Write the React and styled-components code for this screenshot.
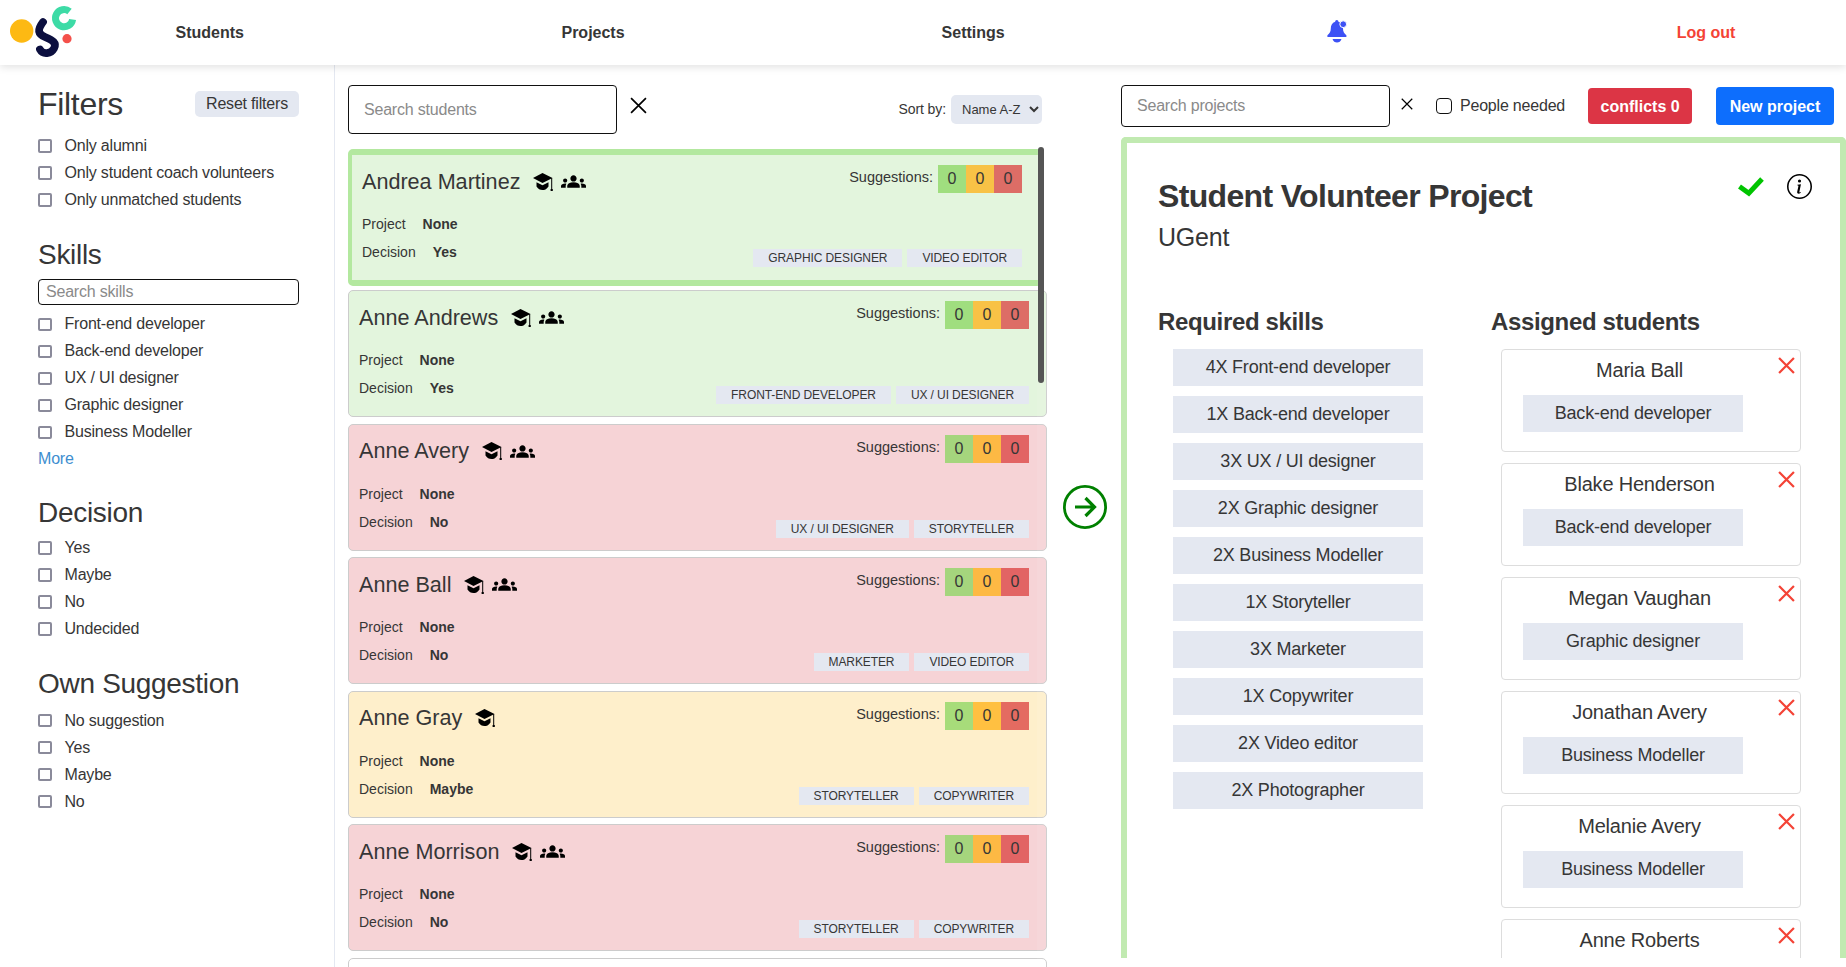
import React from 'react'
import styled, { createGlobalStyle } from 'styled-components'
import { MdGroups } from 'react-icons/md'
import { BsInfoCircle } from 'react-icons/bs'

const GlobalStyle = createGlobalStyle`
	html, body {
		margin: 0;
		height: 100%;
		overflow: hidden;
		background: #ffffff;
		color: #363636;
		font-family: 'Liberation Sans', Arial, sans-serif;
		font-size: 16px;
		letter-spacing: -0.2px;
	}
	* {
		box-sizing: border-box;
	}
	input::placeholder {
		color: #8a8a8a;
	}
`

const students = [
	{ name: 'Andrea Martinez', decision: 'Yes', tone: 'green', selected: true, group: true, skills: ['Graphic designer', 'Video editor'] },
	{ name: 'Anne Andrews', decision: 'Yes', tone: 'green', group: true, skills: ['Front-end developer', 'UX / UI designer'] },
	{ name: 'Anne Avery', decision: 'No', tone: 'red', group: true, skills: ['UX / UI designer', 'Storyteller'] },
	{ name: 'Anne Ball', decision: 'No', tone: 'red', group: true, skills: ['Marketer', 'Video editor'] },
	{ name: 'Anne Gray', decision: 'Maybe', tone: 'yellow', group: false, skills: ['Storyteller', 'Copywriter'] },
	{ name: 'Anne Morrison', decision: 'No', tone: 'red', group: true, skills: ['Storyteller', 'Copywriter'] },
]

const requiredSkills = [
	'4X Front-end developer',
	'1X Back-end developer',
	'3X UX / UI designer',
	'2X Graphic designer',
	'2X Business Modeller',
	'1X Storyteller',
	'3X Marketer',
	'1X Copywriter',
	'2X Video editor',
	'2X Photographer',
]

const assigned = [
	{ name: 'Maria Ball', skill: 'Back-end developer' },
	{ name: 'Blake Henderson', skill: 'Back-end developer' },
	{ name: 'Megan Vaughan', skill: 'Graphic designer' },
	{ name: 'Jonathan Avery', skill: 'Business Modeller' },
	{ name: 'Melanie Avery', skill: 'Business Modeller' },
	{ name: 'Anne Roberts', skill: 'Marketer' },
]

const filterGroups = [
	{ title: 'Skills', listTop: 6.4, search: true, more: true, items: ['Front-end developer', 'Back-end developer', 'UX / UI designer', 'Graphic designer', 'Business Modeller'] },
	{ title: 'Decision', listTop: 3.3, items: ['Yes', 'Maybe', 'No', 'Undecided'] },
	{ title: 'Own Suggestion', listTop: 5.5, items: ['No suggestion', 'Yes', 'Maybe', 'No'] },
]

const Logo = () => (
	<svg width='80' height='65' viewBox='0 0 80 65'>
		<ellipse cx='21.7' cy='31' rx='11.7' ry='11.7' fill='#fdb913' />
		<path d='M43 22 C37 30 38 34 45 37 C53 40.5 57 43 54 48.5 C51 54 43 55 40 49.5' fill='none' stroke='#0c0f3f' strokeWidth='7.8' strokeLinecap='round' />
		<path d='M69.5 11.5 A8.6 8.6 0 1 0 72.6 19.5' fill='none' stroke='#3ddba6' strokeWidth='7' />
		<circle cx='67' cy='38.7' r='4.6' fill='#f4504a' />
	</svg>
)

const Bell = () => (
	<svg width='22' height='23' viewBox='0 0 22 23' fill='#3d51f5'>
		<path d='M9.8 0 C10.8 0 11.4 0.8 11.4 1.8 C14.8 2.8 16 5.6 16 8.6 C16 11.6 17 13.6 19.4 15.2 L19.4 17 L0.4 17 L0.4 15.2 C2.8 13.6 3.8 11.6 3.8 8.6 C3.8 5.6 5 2.8 8.2 1.8 C8.2 0.8 8.8 0 9.8 0 Z' />
		<path d='M5.5 19 L14.5 19 C13.8 21.4 12 22.5 10 22.5 C8 22.5 6.2 21.4 5.5 19 Z' />
		<circle cx='16.2' cy='4.2' r='3.4' stroke='#ffffff' strokeWidth='1' />
	</svg>
)

const CapIcon = () => (
	<svg width='20' height='18' viewBox='0 0 20 18' fill='#000000'>
		<path d='M9.5 0 L19.5 5 L9.5 10 L0 5 Z' />
		<path d='M3.5 9.2 L9.5 12.2 L15.5 9.2 L15.5 13.5 C13.5 16.5 11.5 17 9.5 17 C7 17 5 16 3.5 13.5 Z' />
		<path d='M18.2 5 L19.2 5 L19.2 16 L19.8 16 L19.8 18 L17.6 18 L17.6 16 L18.2 16 Z' />
	</svg>
)

const CheckMark = () => (
	<CheckSvg width='27' height='20' viewBox='0 0 27 20'>
		<path d='M2.5 9.5 L11.8 16.2 L25 2' fill='none' stroke='#00c400' strokeWidth='5' />
	</CheckSvg>
)

const CrossIcon = ({ size = 17, color = '#000000', weight = 1.6 }) => (
	<svg width={size} height={size} viewBox='0 0 16 16'>
		<path d='M1 1 L15 15 M15 1 L1 15' fill='none' stroke={color} strokeWidth={weight} />
	</svg>
)

const ArrowCircle = () => (
	<svg width='44' height='44' viewBox='0 0 44 44'>
		<circle cx='22' cy='22' r='20.6' fill='none' stroke='#008000' strokeWidth='2.8' />
		<path d='M12 22 H31 M22.5 13 L31.5 22 L22.5 31' fill='none' stroke='#008000' strokeWidth='3.2' />
	</svg>
)

const App = () => {
	return (
		<>
			<GlobalStyle />
			<Navbar>
				<Logo />
				<NavLink $left={95.5}>Students</NavLink>
				<NavLink $left={317.5}>Projects</NavLink>
				<NavLink $left={317}>Settings</NavLink>
				<NavIcon $left={322}><Bell /></NavIcon>
				<NavLink $left={328} $danger>Log out</NavLink>
			</Navbar>

			<Main>
				<Sidebar>
					<FiltersHead>
						<FilterTitle>Filters</FilterTitle>
						<ResetButton>Reset filters</ResetButton>
					</FiltersHead>
					<CheckList $top={7.6}>
						<Check label='Only alumni' />
						<Check label='Only student coach volunteers' />
						<Check label='Only unmatched students' />
					</CheckList>

					{filterGroups.map((group) => (
						<FilterGroup key={group.title}>
							<GroupTitle>{group.title}</GroupTitle>
							{group.search && <SkillSearch placeholder='Search skills' />}
							<CheckList $top={group.listTop}>
								{group.items.map((item) => (
									<Check key={item} label={item} />
								))}
							</CheckList>
							{group.more && <MoreLink>More</MoreLink>}
						</FilterGroup>
					))}
				</Sidebar>

				<StudentsColumn>
					<StudentsBar>
						<StudentSearch placeholder='Search students' />
						<ClearButton><CrossIcon /></ClearButton>
						<SortLabel>Sort by:</SortLabel>
						<SortSelect defaultValue='az'>
							<option value='az'>Name A-Z</option>
						</SortSelect>
					</StudentsBar>
					<StudentList>
						{students.map((student) => (
							<StudentCard key={student.name} $tone={student.tone} $selected={student.selected}>
								<CardHead>
									<NameRow>
										<StudentName>{student.name}</StudentName>
										<CapIcon />
										{student.group && <GroupIcon />}
									</NameRow>
									<Suggestions>
										<SuggestionLabel>Suggestions:</SuggestionLabel>
										<Count $kind='yes'>0</Count>
										<Count $kind='maybe'>0</Count>
										<Count $kind='no'>0</Count>
									</Suggestions>
								</CardHead>
								<CardBody>
									<Details>
										<DetailRow>Project<strong>None</strong></DetailRow>
										<DetailRow>Decision<strong>{student.decision}</strong></DetailRow>
									</Details>
									<SkillTags $selected={student.selected}>
										{student.skills.map((skill) => (
											<SkillTag key={skill}>{skill}</SkillTag>
										))}
									</SkillTags>
								</CardBody>
							</StudentCard>
						))}
						<StudentCard $tone='none' />
						<ScrollTrack />
						<ScrollThumb />
					</StudentList>
				</StudentsColumn>

				<ArrowColumn><ArrowCircle /></ArrowColumn>

				<ProjectsColumn>
					<ProjectsBar>
						<ProjectSearch placeholder='Search projects' />
						<ClearButton $small><CrossIcon size={12} weight={1.6} /></ClearButton>
						<PeopleNeeded>
							<PeopleBox type='checkbox' />
							People needed
						</PeopleNeeded>
						<ConflictsButton>conflicts 0</ConflictsButton>
						<NewProjectButton>New project</NewProjectButton>
					</ProjectsBar>
					<ProjectPanel>
						<PanelHead>
							<div>
								<ProjectTitle>Student Volunteer Project</ProjectTitle>
								<ProjectClient>UGent</ProjectClient>
							</div>
							<PanelIcons>
								<CheckMark />
								<BsInfoCircle size={25} color='#000000' />
							</PanelIcons>
						</PanelHead>
						<PanelColumns>
							<div>
								<SectionTitle>Required skills</SectionTitle>
								<SkillStack>
									{requiredSkills.map((skill) => (
										<RequiredSkill key={skill}>{skill}</RequiredSkill>
									))}
								</SkillStack>
							</div>
							<div>
								<SectionTitle>Assigned students</SectionTitle>
								<AssignedStack>
									{assigned.map((person) => (
										<AssignedCard key={person.name}>
											<AssignedName>{person.name}</AssignedName>
											<RemoveButton><CrossIcon size={17} color='#f44336' weight={2.1} /></RemoveButton>
											<AssignedSkill>{person.skill}</AssignedSkill>
										</AssignedCard>
									))}
								</AssignedStack>
							</div>
						</PanelColumns>
					</ProjectPanel>
				</ProjectsColumn>
			</Main>
		</>
	)
}

const Check = ({ label }) => (
	<CheckRow>
		<CheckBox type='checkbox' />
		{label}
	</CheckRow>
)

const Navbar = styled.nav`
	position: relative;
	z-index: 2;
	display: flex;
	align-items: center;
	height: 65px;
	background: #ffffff;
	box-shadow: 0 2px 8px rgba(0, 0, 0, 0.12);
	letter-spacing: 0;
`

const NavLink = styled.a`
	margin-left: ${(props) => props.$left}px;
	font-weight: 700;
	color: ${(props) => (props.$danger ? '#f44336' : '#363636')};
`

const NavIcon = styled.span`
	display: flex;
	margin-left: ${(props) => props.$left}px;
	margin-top: -2px;
`

const Main = styled.main`
	display: flex;
	height: 902px;
	overflow: hidden;
`

const Sidebar = styled.aside`
	flex: 0 0 335px;
	padding: 18px 35px 0 38px;
	border-right: 1px solid #e4e8f1;
`

const FiltersHead = styled.div`
	display: flex;
	align-items: center;
	justify-content: space-between;
	height: 42px;
`

const FilterTitle = styled.h1`
	margin: 0;
	font-size: 32px;
	font-weight: 400;
	letter-spacing: -0.3px;
`

const ResetButton = styled.button`
	height: 26px;
	width: 104px;
	padding: 0;
	border: none;
	border-radius: 5px;
	background: #e4e8f1;
	color: #363636;
	font: inherit;
	letter-spacing: -0.2px;
`

const CheckList = styled.div`
	display: flex;
	flex-direction: column;
	margin-top: ${(props) => props.$top}px;
`

const CheckRow = styled.label`
	display: flex;
	align-items: center;
	gap: 13px;
	height: 27px;
`

const CheckBox = styled.input`
	appearance: none;
	width: 13.5px;
	height: 13.5px;
	margin: 0;
	border: 2px solid #8a8a9a;
	border-radius: 2px;
	background: #ffffff;
`

const FilterGroup = styled.section`
	margin-top: 23px;
`

const GroupTitle = styled.h2`
	margin: 0;
	font-size: 28px;
	font-weight: 400;
	line-height: 36px;
	letter-spacing: -0.3px;
`

const SkillSearch = styled.input`
	display: block;
	width: 100%;
	height: 26px;
	margin-top: 6px;
	padding: 0 7px;
	border: 1px solid #111111;
	border-radius: 4px;
	font: inherit;
	letter-spacing: -0.2px;
`

const MoreLink = styled.a`
	display: block;
	margin: 4.2px 0 27.1px;
	color: #3e8ed0;
`

const StudentsColumn = styled.section`
	flex: 0 0 712px;
	padding: 20px 0 0 13px;
`

const StudentsBar = styled.div`
	display: flex;
	align-items: flex-start;
	height: 64px;
	padding-right: 5px;
`

const StudentSearch = styled.input`
	width: 269px;
	height: 49px;
	padding: 0 15px;
	border: 1px solid #111111;
	border-radius: 4px;
	font: inherit;
	letter-spacing: -0.2px;
`

const ClearButton = styled.span`
	display: flex;
	margin: ${(props) => (props.$small ? '13px 23px 0 11px' : '12px 0 0 13px')};
`

const SortLabel = styled.span`
	margin: 16px 5px 0 auto;
	font-size: 14px;
	letter-spacing: -0.1px;
`

const SortSelect = styled.select`
	width: 91px;
	height: 29px;
	margin-top: 10px;
	padding-left: 7px;
	border: none;
	border-radius: 5px;
	background: #e4e8f1;
	color: #363636;
	font-family: inherit;
	font-size: 13px;
`

const StudentList = styled.div`
	position: relative;
	display: flex;
	flex-direction: column;
	gap: 6.5px;
`

const toneColors = {
	green: '#e3f5dd',
	red: '#f6d3d6',
	yellow: '#feefcb',
	none: '#ffffff',
}

const StudentCard = styled.article`
	flex: none;
	min-height: 127px;
	padding: 10px 17px 12px 10px;
	border: ${(props) => (props.$selected ? '4px' : '1px')} solid ${(props) => (props.$selected ? '#b3e89f' : '#cccccc')};
	border-top-width: ${(props) => (props.$selected ? '6px' : '1px')};
	border-bottom-width: ${(props) => (props.$selected ? '6px' : '1px')};
	border-radius: 5px;
	background: ${(props) => toneColors[props.$tone]};
	margin-right: ${(props) => (props.$selected ? '4px' : '0')};
	margin-bottom: ${(props) => (props.$selected ? '-2.5px' : '0')};
	letter-spacing: 0;
`

const CardHead = styled.div`
	display: flex;
	justify-content: space-between;
	height: 28px;
	margin-bottom: 17px;
`

const NameRow = styled.div`
	display: flex;
	align-items: center;
	gap: 9px;
	padding-top: 5px;
`

const StudentName = styled.span`
	margin-right: 4px;
	font-size: 21.6px;
`

const GroupIcon = styled(MdGroups)`
	width: 25px;
	height: 25px;
	margin-left: -1px;
	color: #000000;
`

const Suggestions = styled.div`
	display: flex;
`

const SuggestionLabel = styled.span`
	margin-right: 5px;
	font-size: 14.5px;
	line-height: 24px;
`

const countColors = {
	yes: 'rgba(138, 214, 95, 0.75)',
	maybe: 'rgba(255, 176, 19, 0.75)',
	no: 'rgba(219, 63, 62, 0.75)',
}

const Count = styled.span`
	display: flex;
	align-items: center;
	justify-content: center;
	width: 28px;
	height: 28px;
	background: ${(props) => countColors[props.$kind]};
	font-size: 16px;
`

const CardBody = styled.div`
	display: flex;
	align-items: flex-end;
	justify-content: space-between;
`

const Details = styled.div`
	padding-bottom: 2px;
`

const DetailRow = styled.div`
	height: 28px;
	font-size: 14px;
	line-height: 28px;

	strong {
		margin-left: 17px;
	}
`

const SkillTags = styled.div`
	display: flex;
	gap: 5px;
	margin-bottom: ${(props) => (props.$selected ? '1px' : '0')};
`

const SkillTag = styled.span`
	height: 18px;
	padding: 0 15px;
	background: #e4e8f1;
	font-size: 12px;
	line-height: 18px;
	letter-spacing: -0.1px;
	text-transform: uppercase;
`

const ScrollTrack = styled.div`
	position: absolute;
	top: -2px;
	bottom: 0;
	right: 0;
	width: 10px;
	background: rgba(255, 255, 255, 0.08);
`

const ScrollThumb = styled.div`
	position: absolute;
	top: -2px;
	right: 3px;
	width: 6px;
	height: 236px;
	border-radius: 3px;
	background: #555555;
`

const ArrowColumn = styled.div`
	display: flex;
	flex: 0 0 74px;
	align-items: center;
	justify-content: center;
	padding: 0 0 18px 2px;
`

const ProjectsColumn = styled.section`
	flex: 1;
	min-width: 0;
	padding-top: 20px;
`

const ProjectsBar = styled.div`
	display: flex;
	align-items: flex-start;
	height: 52px;
	padding-right: 12px;
`

const ProjectSearch = styled.input`
	width: 269px;
	height: 42px;
	padding: 0 15px;
	border: 1px solid #111111;
	border-radius: 4px;
	font: inherit;
	letter-spacing: -0.2px;
`

const PeopleNeeded = styled.label`
	display: flex;
	align-items: center;
	gap: 8px;
	height: 28px;
	margin-top: 7px;
`

const PeopleBox = styled.input`
	appearance: none;
	width: 16px;
	height: 16px;
	margin: 0;
	border: 1px solid #111111;
	border-radius: 4px;
	background: #ffffff;
`

const BaseButton = styled.button`
	padding: 1px 0 0;
	border: none;
	border-radius: 4px;
	color: #ffffff;
	font-family: inherit;
	font-size: 16px;
	font-weight: 700;
`

const ConflictsButton = styled(BaseButton)`
	width: 104px;
	height: 36px;
	margin: 3px 0 0 23px;
	background: #dc3545;
`

const NewProjectButton = styled(BaseButton)`
	width: 118px;
	height: 38px;
	margin: 2px 0 0 auto;
	background: #0d6efd;
`

const ProjectPanel = styled.div`
	height: 821px;
	padding: 34px 28px 0 31px;
	border: 6px solid #c1eab1;
	border-bottom: none;
	border-radius: 5px 5px 0 0;
	overflow: hidden;
`

const PanelHead = styled.div`
	display: flex;
	justify-content: space-between;
`

const PanelIcons = styled.div`
	display: flex;
	align-items: flex-start;
	gap: 23px;
	margin-top: -3px;
`

const CheckSvg = styled.svg`
	margin-top: 3px;
`

const ProjectTitle = styled.h2`
	margin: 0;
	font-size: 32px;
	font-weight: 700;
	line-height: 38px;
	letter-spacing: -0.66px;
`

const ProjectClient = styled.p`
	margin: 3px 0 0;
	font-size: 25px;
	line-height: 38px;
`

const PanelColumns = styled.div`
	display: grid;
	grid-template-columns: 333px 1fr;
	margin-top: 52px;
`

const SectionTitle = styled.h3`
	margin: 0;
	font-size: 24px;
	font-weight: 700;
	line-height: 28px;
	letter-spacing: -0.35px;
`

const SkillStack = styled.div`
	display: flex;
	flex-direction: column;
	gap: 10px;
	margin: 13px 0 0 15px;
`

const RequiredSkill = styled.div`
	width: 250px;
	height: 37px;
	background: #e4e8f1;
	font-size: 18px;
	line-height: 37px;
	text-align: center;
`

const AssignedStack = styled.div`
	display: flex;
	flex-direction: column;
	gap: 11px;
	margin: 13px 0 0 10px;
`

const AssignedCard = styled.div`
	position: relative;
	flex: none;
	width: 300px;
	height: 103px;
	padding-top: 7px;
	border: 1px solid #dddddd;
	border-radius: 4px;
`

const AssignedName = styled.div`
	width: 275px;
	font-size: 20px;
	line-height: 26px;
	text-align: center;
`

const RemoveButton = styled.span`
	position: absolute;
	top: 7px;
	right: 5px;
	display: flex;
`

const AssignedSkill = styled.div`
	width: 220px;
	height: 37px;
	margin: 12px 0 0 21px;
	background: #e4e8f1;
	font-size: 18px;
	line-height: 37px;
	text-align: center;
`

export default App
